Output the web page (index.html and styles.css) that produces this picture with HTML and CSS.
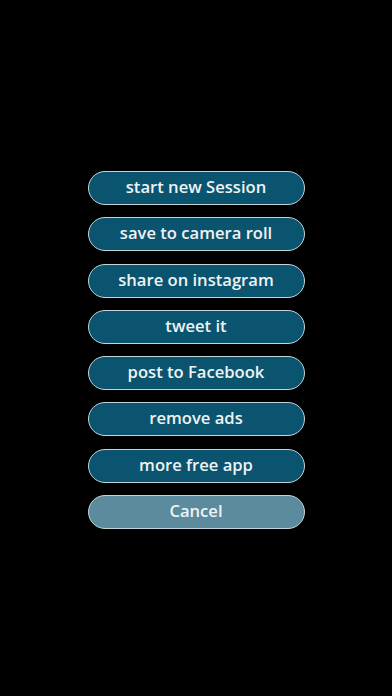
FILE: index.html
```html
<!DOCTYPE html>
<html>
<head>
<meta charset="utf-8">
<link rel="stylesheet" href="styles.css">
</head>
<body>
<div class="screen">
  <div class="menu">
    <button class="btn">start new Session</button>
    <button class="btn">save to camera roll</button>
    <button class="btn">share on instagram</button>
    <button class="btn">tweet it</button>
    <button class="btn">post to Facebook</button>
    <button class="btn">remove ads</button>
    <button class="btn">more free app</button>
    <button class="btn btn-cancel">Cancel</button>
  </div>
</div>
</body>
</html>
```
FILE: styles.css
```css
html, body {
  margin: 0;
  padding: 0;
  background: #000;
}
.screen {
  width: 392px;
  height: 696px;
  background: #000;
  display: flex;
  justify-content: center;
  padding-top: 171px;
  box-sizing: border-box;
}
.menu {
  width: 217px;
  display: flex;
  flex-direction: column;
  gap: 12.3px;
}
.btn {
  height: 34px;
  margin: 0;
  padding: 0 0 2px;
  border: 1px solid #c3d3da;
  border-radius: 17px;
  background: #0b5470;
  color: #eef3f5;
  font-family: "Open Sans", "Lato", sans-serif;
  font-weight: 600;
  font-size: 16.6px;
  line-height: 30px;
  text-align: center;
}
.btn-cancel {
  background: #5b8b9d;
}
```
